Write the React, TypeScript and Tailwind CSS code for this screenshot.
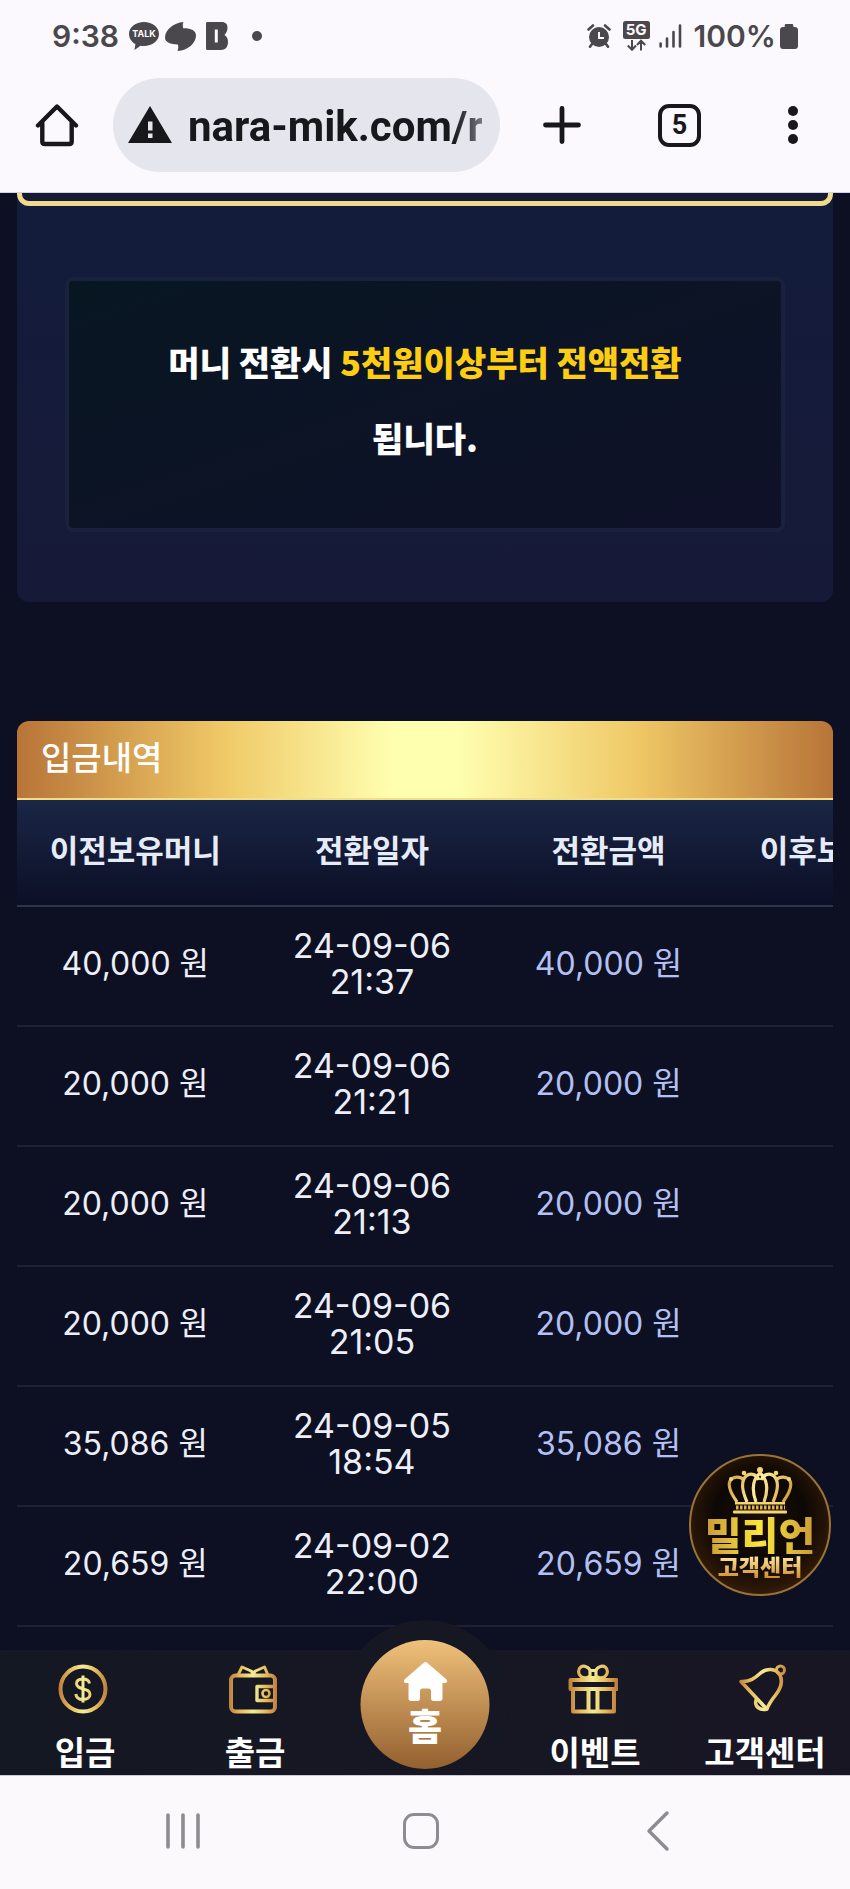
import type { ReactNode } from "react"

type Row = {
  before: string
  date: string
  time: string
  amount: string
}

const rows: Row[] = [
  { before: "40,000 원", date: "24-09-06", time: "21:37", amount: "40,000 원" },
  { before: "20,000 원", date: "24-09-06", time: "21:21", amount: "20,000 원" },
  { before: "20,000 원", date: "24-09-06", time: "21:13", amount: "20,000 원" },
  { before: "20,000 원", date: "24-09-06", time: "21:05", amount: "20,000 원" },
  { before: "35,086 원", date: "24-09-05", time: "18:54", amount: "35,086 원" },
  { before: "20,659 원", date: "24-09-02", time: "22:00", amount: "20,659 원" },
]

const columns = ["이전보유머니", "전환일자", "전환금액", "이후보유머니"]

function StatusBar() {
  return (
    <div className="flex h-[72px] items-center justify-between px-[52px] font-['Inter',sans-serif] text-[30px] font-semibold leading-9 text-[#4a484c]">
      <div className="flex items-center">
        <span>9:38</span>
        <span className="relative ml-[10px] block h-7 w-[30px]">
          <svg viewBox="0 0 30 28" className="h-7 w-[30px]" fill="currentColor">
            <path d="M15 0C6.700 0 0 5.300 0 12c0 4.300 2.500 8 6.400 10.100L5.500 28l6-4.300c1.100.2 2.300.3 3.500.3 8.300 0 15-5.300 15-12S23.300 0 15 0z" />
          </svg>
          <span className="absolute inset-x-0 top-[6px] text-center text-[9px] font-bold leading-3 text-[#fbf9fc]">TALK</span>
        </span>
        <svg viewBox="0 0 31 29" className="ml-[6px] h-[29px] w-[31px]" fill="currentColor">
          <path d="M18.500 0c-.9 2-.9 4-.3 6.300C25 6 31 8 31 13.500 31 21 23 28.500 12.500 29c.9-2.200 1-4.400.4-6.600C6 22.500 0 20.500 0 15.500 0 8 8.500.8 18.500 0z" />
        </svg>
        <svg viewBox="0 0 22 28" className="ml-[10px] h-7 w-[22px]" fill="currentColor" fillRule="evenodd">
          <path d="M1.500 0H16c3.500 0 5.500 2.200 5.500 5.600 0 3.200-1 5-3 7.400 2.400 1.500 3.500 3.800 3.500 7 0 5-2.700 8-7 8H1.500C.6 28 0 27.400 0 26.500v-25C0 .6.600 0 1.500 0zM8.800 7.500v13h3v-13h-3z" />
        </svg>
        <span className="ml-6 size-[10px] rounded-full bg-current" />
      </div>
      <div className="flex items-center">
        <svg viewBox="0 0 24 24" className="size-6" fill="none" stroke="currentColor">
          <circle cx="12" cy="13" r="10" fill="currentColor" stroke="none" />
          <path d="M1.500 5.500l4.500-4M22.500 5.500L18 1.500M5 20l-2 2.700M19 20l2 2.700" strokeWidth="2.600" strokeLinecap="round" />
          <path d="M12 8v6h5" stroke="#fbf9fc" strokeWidth="2" />
        </svg>
        <span className="relative ml-3 block h-[30px] w-[27px]">
          <svg viewBox="0 0 27 30" className="h-[30px] w-[27px]" fill="none" stroke="currentColor" strokeWidth="2">
            <rect width="27" height="18" rx="2.500" fill="currentColor" stroke="none" />
            <path d="M9 19v9.500M4.800 24.500L9 28.800l4-4.300M18 29.500V20M14 24l4-4.200 4.200 4.200" />
          </svg>
          <span className="absolute inset-x-0 top-[2px] text-center text-[15px] font-bold leading-[14px] text-[#fbf9fc]">5G</span>
        </span>
        <svg viewBox="0 0 23 24" className="ml-[9px] h-6 w-[23px]" stroke="currentColor" strokeWidth="2.600" strokeLinecap="round">
          <path d="M1.600 19.500v3M8 14.500v8M14.500 8v14.500M21 1.500v21" />
        </svg>
        <span className="ml-3">100%</span>
        <svg viewBox="0 0 18 25" className="ml-1 h-[25px] w-[18px]" fill="currentColor">
          <path d="M6 0h6c.8 0 1.300.6 1.300 1.300V3H15c1.700 0 3 1.200 3 3v16c0 1.700-1.300 3-3 3H3c-1.700 0-3-1.300-3-3V6c0-1.800 1.300-3 3-3h1.700V1.300C4.700.6 5.200 0 6 0z" />
        </svg>
      </div>
    </div>
  )
}

function BrowserBar() {
  return (
    <div className="flex items-center px-[35px] pb-5 pt-[6px] text-[#17171c]">
      <button type="button" aria-label="Home" className="shrink-0">
        <svg viewBox="0 0 44 44" className="size-11" fill="none" stroke="currentColor" strokeWidth="4.400" strokeLinecap="round" strokeLinejoin="round">
          <path d="M3 22.500L22 3.500l19 19" />
          <path d="M7.300 20v18.500c0 1.500 1 2.500 2.500 2.500h24.400c1.500 0 2.500-1 2.500-2.500V20" />
        </svg>
      </button>
      <label className="ml-[34px] flex h-[94px] min-w-0 flex-1 items-center rounded-full bg-[#e5e5ee] pl-[15px] pr-[18px]">
        <svg viewBox="0 0 44 38" className="h-[38px] w-11 shrink-0">
          <path d="M22 0l22 37H0z" fill="currentColor" />
          <path d="M20 15.500h4.500v9H20zM20 27.500h4.500V32H20z" fill="#e5e5ee" />
        </svg>
        <input
          type="text"
          aria-label="Address"
          defaultValue="nara-mik.com/r"
          className="ml-4 mt-1 w-full min-w-0 bg-linear-to-r from-[#17171c] from-90% to-[#77777d] bg-clip-text font-['Roboto',sans-serif] text-[42px] font-bold leading-[52px] text-transparent outline-none"
        />
      </label>
      <button type="button" aria-label="New tab" className="ml-10 shrink-0">
        <svg viewBox="0 0 44 44" className="size-11" stroke="currentColor" strokeWidth="4.800" strokeLinecap="round">
          <path d="M22 5.500v33M5.500 22h33" />
        </svg>
      </button>
      <button type="button" aria-label="Tabs" className="ml-[74px] flex size-[43px] shrink-0 items-center justify-center rounded-[11px] border-4 border-current font-['Roboto',sans-serif] text-[27px] font-bold leading-8">
        5
      </button>
      <button type="button" aria-label="Menu" className="ml-[70px] flex w-11 shrink-0 flex-col items-center gap-1">
        <span className="size-[10px] rounded-full bg-current" />
        <span className="size-[10px] rounded-full bg-current" />
        <span className="size-[10px] rounded-full bg-current" />
      </button>
    </div>
  )
}

function Notice() {
  return (
    <section className="rounded-b-xl bg-linear-to-b from-[#131c3b] to-[#161a38] pb-[70px]">
      <div className="h-[13px] rounded-b-xl border-[5px] border-t-0 border-[#efda8d] bg-[#161b33]" />
      <div className="mx-12 mt-[71px] rounded-lg border-4 border-[#1a213c] bg-linear-to-br from-[#081622] to-[#0f1128] px-20 pb-[52px] pt-[43px]">
        <p className="break-keep text-center text-[34px] font-black leading-[76px] text-white">
          머니 전환시 <span className="text-[#fccd12]">5천원이상부터 전액전환</span> 됩니다.
        </p>
      </div>
    </section>
  )
}

function History() {
  return (
    <section className="mt-[119px]">
      <h2 className="h-[79px] rounded-t-xl border-b-2 border-[#f3dd85] bg-[linear-gradient(90deg,#b87438_0%,#efc866_25%,#ffffb0_46%,#ffffb0_54%,#efc866_76%,#b87438_100%)] pl-6 text-[33px] font-medium leading-[70px] text-white">
        입금내역
      </h2>
      <div className="overflow-hidden">
        <table className="w-[116%] table-fixed border-collapse text-center text-[#eceef8]">
          <thead className="bg-linear-to-b from-[#1a2646] to-[#0c0f26]">
            <tr className="h-[106px] border-b-2 border-[#2f364b]">
              {columns.map((name) => (
                <th key={name} scope="col" className="pb-2 text-[31px] font-bold leading-9 text-[#e6ebf8]">
                  {name}
                </th>
              ))}
            </tr>
          </thead>
          <tbody className="font-['Inter','Noto_Sans_CJK_KR',sans-serif] leading-[36px]">
            {rows.map((row) => (
              <tr key={row.time} className="h-[120px] border-b-2 border-[#1e2033]">
                <td className="pb-1 text-[32px]">{row.before}</td>
                <td className="pb-1 text-[34px]">
                  {row.date}
                  <br />
                  {row.time}
                </td>
                <td className="pb-1 text-[32px] text-[#b3c0f3]">{row.amount}</td>
                <td />
              </tr>
            ))}
          </tbody>
        </table>
      </div>
    </section>
  )
}

function SupportBadge() {
  return (
    <a
      href="#support"
      className="absolute bottom-[54px] right-[19px] flex size-[142px] flex-col items-center rounded-full border-2 border-[#9a7434] bg-[radial-gradient(circle_at_50%_45%,#1a0d05_0%,#0d0805_45%,#2b1606_68%,#573813_100%)] pt-[11px] font-black"
    >
      <svg viewBox="0 0 66 47" className="h-[47px] w-[66px] shrink-0" fill="none">
        <defs>
          <linearGradient id="crown" gradientUnits="userSpaceOnUse" x1="0" y1="0" x2="66" y2="30">
            <stop offset="0" stopColor="#c88f2c" />
            <stop offset="0.500" stopColor="#fff0a0" />
            <stop offset="1" stopColor="#cf9630" />
          </linearGradient>
        </defs>
        <g stroke="url(#crown)" strokeWidth="3.200" strokeLinejoin="round">
          <path d="M10 35C5 28 0 20 3 14c3-5 10-5 14-1" />
          <path d="M56 35c5-7 10-15 7-21-3-5-10-5-14-1" />
          <path d="M20 35c-4-9-7-20-1-26 5-4 11-1 13 4" />
          <path d="M46 35c4-9 7-20 1-26-5-4-11-1-13 4" />
          <path d="M29 35C25 24 25 13 33 6c8 7 8 18 4 29" />
        </g>
        <g fill="#f4d673">
          <circle cx="33" cy="3" r="3" />
          <circle cx="17" cy="6" r="2.300" />
          <circle cx="49" cy="6" r="2.300" />
          <circle cx="4" cy="12" r="2" />
          <circle cx="62" cy="12" r="2" />
          <rect x="8" y="35" width="50" height="2.500" />
          <rect x="6" y="43.500" width="54" height="3" rx="1" />
        </g>
        <path d="M9 40.500h49" stroke="#e0b350" strokeWidth="4" strokeDasharray="2.500 1.500" />
      </svg>
      <span className="bg-linear-to-r from-[#c99a35] via-[#fbe63c] to-[#c99a35] bg-clip-text text-[40px] leading-10 text-transparent">밀리언</span>
      <span className="bg-linear-to-b from-[#fff0a5] to-[#cf8f28] bg-clip-text text-[23px] leading-6 text-transparent">고객센터</span>
    </a>
  )
}

function NavItem({ label, href, children }: { label: string; href: string; children: ReactNode }) {
  return (
    <a href={href} className="flex flex-1 flex-col items-center whitespace-nowrap pb-[6px] pt-[14px]">
      <svg viewBox="0 0 50 50" className="mr-1 size-[50px]" fill="none" stroke="url(#gold)" strokeWidth="4" strokeLinejoin="round">
        {children}
      </svg>
      <span className="mt-[19px] text-[33px] font-bold leading-9 text-white">{label}</span>
    </a>
  )
}

function BottomNav() {
  return (
    <nav className="relative flex bg-linear-to-r from-[#141823] to-[#191624]">
      <svg className="absolute size-0" aria-hidden="true">
        <defs>
          <linearGradient id="gold" gradientUnits="userSpaceOnUse" x1="0" y1="0" x2="50" y2="0">
            <stop offset="0" stopColor="#b9783a" />
            <stop offset="0.250" stopColor="#e6bc5c" />
            <stop offset="0.500" stopColor="#f3ed96" />
            <stop offset="0.750" stopColor="#e6bc5c" />
            <stop offset="1" stopColor="#b9783a" />
          </linearGradient>
        </defs>
      </svg>
      <NavItem label="입금" href="#deposit">
        <circle cx="25" cy="25" r="22.500" />
        <path d="M25 11.500v27M31.500 19.500c-.5-3-3-4.500-6.500-4.500-4 0-6.500 1.800-6.500 4.800 0 6.700 13.500 3.500 13.500 10.400 0 3.200-2.800 5.300-7 5.300s-6.800-2-7.200-5.500" strokeWidth="3" />
      </NavItem>
      <NavItem label="출금" href="#withdraw">
        <rect x="3" y="11.500" width="44" height="36" rx="4.500" />
        <path d="M10 11l4-8 9 4 4 3.500M40 11l-3.500-8-9 4-4 3.500" strokeWidth="3" />
        <path d="M46 22.500H29v14h17" strokeWidth="3.400" />
        <circle cx="38" cy="29.500" r="3.500" strokeWidth="2.600" />
      </NavItem>
      <div className="flex-1">
        <div className="absolute -top-[30px] left-1/2 size-[168px] -translate-x-1/2 rounded-full bg-[#151723] [clip-path:inset(0_0_30px_0)]" />
        <a
          href="#home"
          className="absolute -top-[10px] left-1/2 flex size-[129px] -translate-x-1/2 flex-col items-center rounded-full bg-linear-to-b from-[#f0c17b] to-[#93602f] pt-[22px] text-white"
        >
          <svg viewBox="0 0 44 39" className="h-[39px] w-11" fill="currentColor">
            <path d="M20 1c1.200-1.200 2.800-1.200 4 0l18.800 16.200c1.600 1.500.8 3.800-1.300 3.800H39v15.500c0 1.500-1 2.500-2.500 2.500H30c-1.500 0-2.500-1-2.500-2.500V29c0-1.500-1-2.500-2.500-2.500h-6c-1.500 0-2.500 1-2.500 2.500v7.500c0 1.500-1 2.500-2.500 2.500H7.500C6 39 5 38 5 36.500V21H2.500C.4 21-.4 18.700 1.200 17.200z" />
          </svg>
          <span className="mt-1 text-[37px] font-black leading-10">홈</span>
        </a>
      </div>
      <NavItem label="이벤트" href="#event">
        <rect x="2.500" y="16" width="46" height="9" />
        <path d="M5 26v21.500h41V26M20.500 26v21M29.500 26v21" />
        <path d="M22 12c-2 2-6 2.500-9 .5-3-2.200-3.200-7-.5-9.300 3.500-2.700 9 .3 10 4.300M28 12c2 2 6 2.500 9 .5 3-2.200 3.200-7 .5-9.300-3.500-2.700-9 .3-10 4.300M22 6.500h6v7h-6z" strokeWidth="3.200" />
      </NavItem>
      <NavItem label="고객센터" href="#support">
        <path d="M3 17.500C12 18 17 14 22 9.500 28 4 38 4 42 11c3 6.500 1 13-4 19.500-4 5-7 9-9 14.500L25 41z" strokeWidth="3.600" />
        <circle cx="42.500" cy="6" r="4" strokeWidth="3" />
        <path d="M18.500 35c-1.500 3-1 6.500 1.500 8.500s5.500 2.500 9 1.500" strokeWidth="3.600" />
      </NavItem>
    </nav>
  )
}

function SystemNav() {
  return (
    <div className="grid h-[114px] grid-cols-[1fr_100px_1fr] items-center border-t border-[#c8c9d2] bg-[#fcf9fd] pb-1 pl-[161px] pr-[170px] text-[#8e8c90]">
      <button type="button" aria-label="Recent apps" className="justify-self-start">
        <svg viewBox="0 0 44 44" className="size-11" stroke="currentColor" strokeWidth="3.600" strokeLinecap="round">
          <path d="M7 6v32M22 6v32M37 6v32" />
        </svg>
      </button>
      <button type="button" aria-label="Home screen" className="size-9 justify-self-center rounded-[11px] border-[3px] border-current" />
      <button type="button" aria-label="Back" className="justify-self-end">
        <svg viewBox="0 0 44 44" className="size-11" fill="none" stroke="currentColor" strokeWidth="3.400" strokeLinecap="round" strokeLinejoin="round">
          <path d="M31 4L13 22l18 18" />
        </svg>
      </button>
    </div>
  )
}

export default function App() {
  return (
    <div className="flex min-h-screen flex-col bg-[#0d0f22] font-['Noto_Sans_CJK_KR',sans-serif]">
      <header className="border-b border-[#cfd2e2] bg-[#fbf9fe]">
        <StatusBar />
        <BrowserBar />
      </header>
      <main className="relative flex-1 px-[17px] pb-[22px]">
        <Notice />
        <History />
        <SupportBadge />
      </main>
      <BottomNav />
      <SystemNav />
    </div>
  )
}
